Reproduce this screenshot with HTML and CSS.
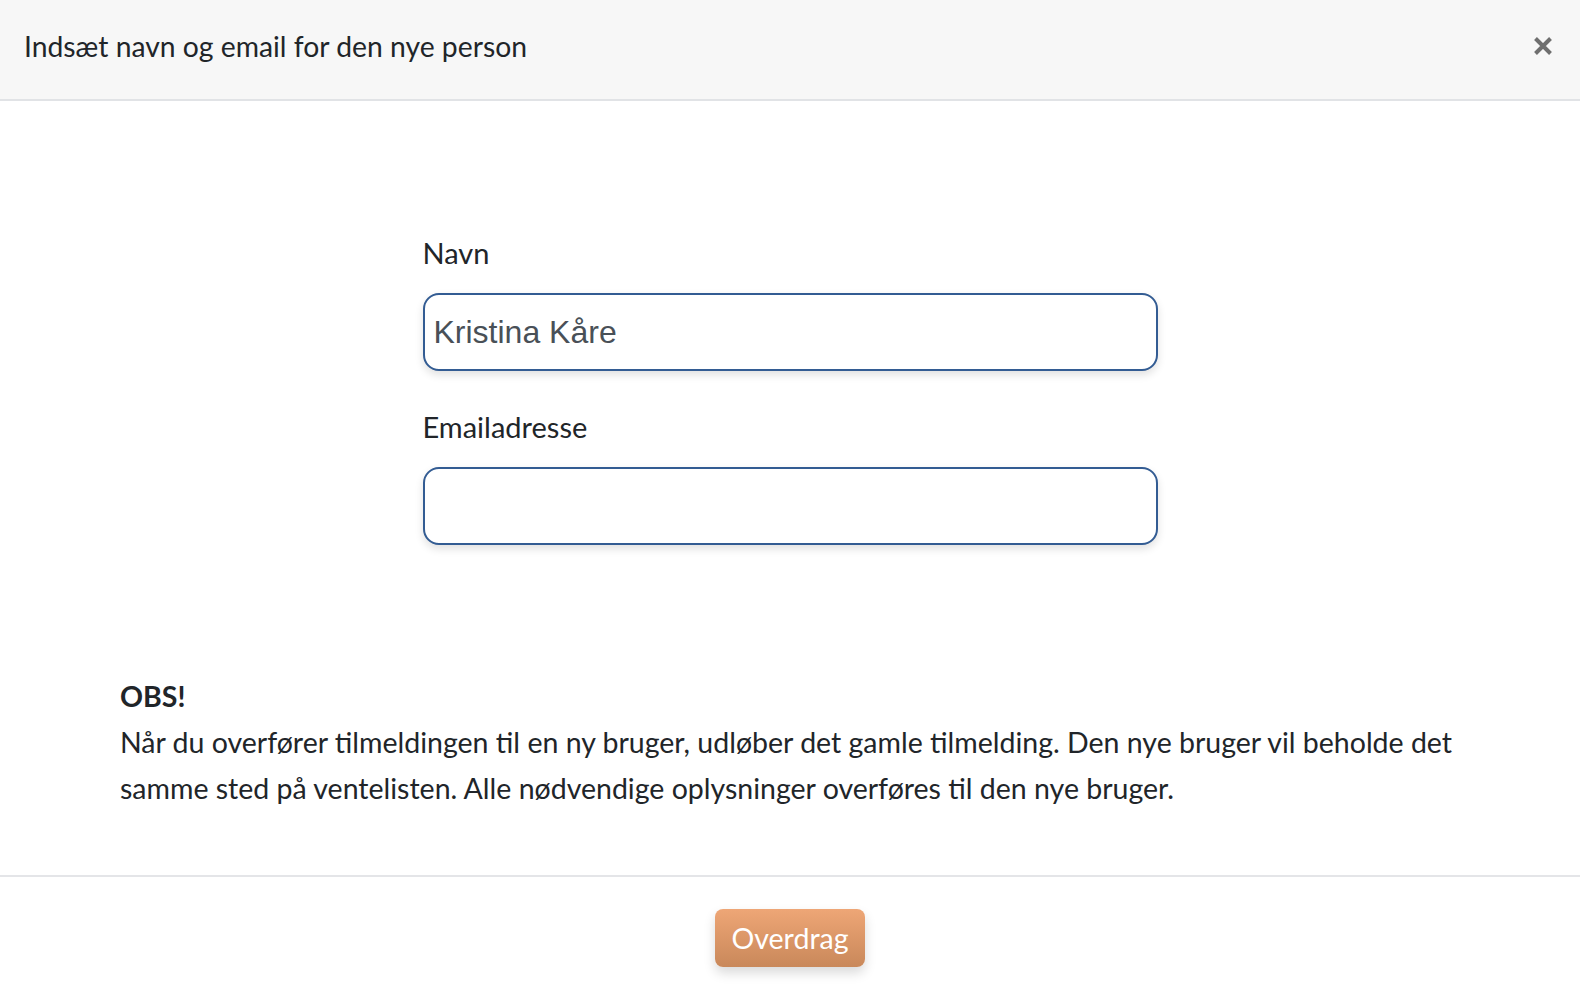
FILE: index.html
```html
<!DOCTYPE html>
<html>
<head>
  <title>Overdrag tilmelding</title>
  <link rel="stylesheet" href="styles.css">
</head>
<body>
  <div class="modal">
    <div class="modal-header">
      <h4 class="modal-title">Indsæt navn og email for den nye person</h4>
      <button class="close" type="button" aria-label="Luk">
        <svg width="20" height="20" viewBox="0 0 20 20">
          <path d="M2.5 2.5 L17.5 17.5 M17.5 2.5 L2.5 17.5" stroke="#6f6f6f" stroke-width="4"/>
        </svg>
      </button>
    </div>

    <div class="modal-body">
      <form class="transfer-form">
        <label for="name">Navn</label>
        <input type="text" id="name" value="Kristina Kåre">
        <label for="email">Emailadresse</label>
        <input type="email" id="email">
      </form>

      <div class="notice">
        <strong>OBS!</strong>
        <p>Når du overfører tilmeldingen til en ny bruger, udløber det gamle tilmelding. Den nye bruger vil beholde det samme sted på ventelisten. Alle nødvendige oplysninger overføres til den nye bruger.</p>
      </div>
    </div>

    <div class="modal-footer">
      <button class="btn-transfer" type="button">Overdrag</button>
    </div>
  </div>
</body>
</html>
```

FILE: styles.css
```css
body {
  margin: 0;
  font-family: Lato, "Open Sans", sans-serif;
  color: #212529;
  background-color: #fff;
}
.modal {
  width: 100%;
}
.modal-header {
  height: 101px;
  box-sizing: border-box;
  background-color: #f7f7f7;
  border-bottom: 2px solid #e1e3e6;
  display: flex;
  align-items: center;
  justify-content: space-between;
  padding: 0 27px 8px 24px;
}
.modal-title {
  margin: 0;
  font-size: 28.3px;
  font-weight: 400;
}
.close {
  background: none;
  border: none;
  padding: 0;
  display: flex;
  cursor: pointer;
}
.modal-body {
  padding: 136px 120px 0;
}
.transfer-form {
  width: 735px;
  margin: 0 auto;
  display: flex;
  flex-direction: column;
}
.transfer-form label {
  font-size: 29px;
  line-height: 32px;
  margin-bottom: 24px;
}
.transfer-form input {
  height: 78px;
  box-sizing: border-box;
  border: 2px solid #335c93;
  border-radius: 16px;
  padding: 0 9px;
  font-family: "Liberation Sans", Arial, sans-serif;
  font-size: 32px;
  color: #495057;
  box-shadow: 0 4px 8px rgba(0, 0, 0, 0.12);
  outline: none;
  margin-bottom: 40px;
}
.transfer-form input:last-child {
  margin-bottom: 0;
}
.notice {
  margin-top: 128px;
  font-size: 28.5px;
  line-height: 46px;
}
.notice strong {
  display: block;
  font-weight: 700;
}
.notice p {
  margin: 0;
}
.modal-footer {
  margin-top: 64px;
  border-top: 2px solid #e4e5e8;
  display: flex;
  justify-content: center;
  padding: 32px 0;
}
.btn-transfer {
  width: 150px;
  height: 58px;
  border: none;
  border-radius: 8px;
  background: linear-gradient(#eea676, #c9885a);
  color: #fff;
  font-family: Lato, sans-serif;
  font-size: 28.5px;
  box-shadow: 0 6px 12px rgba(0, 0, 0, 0.15);
  cursor: pointer;
}
```
